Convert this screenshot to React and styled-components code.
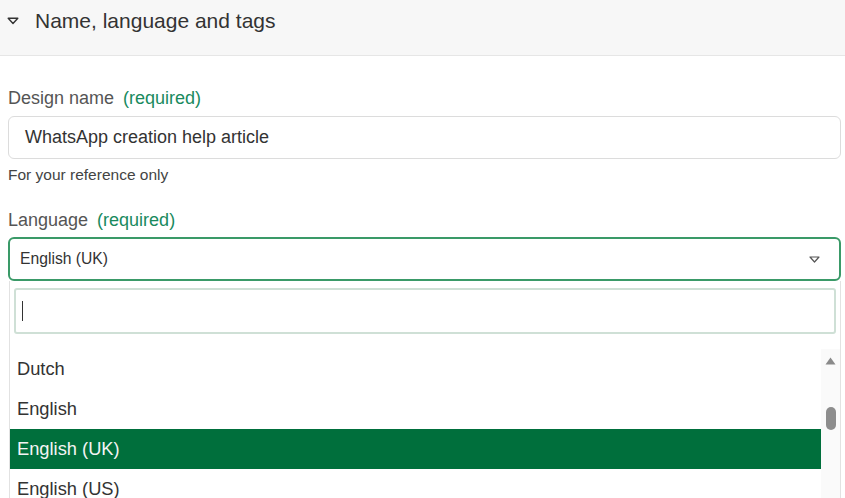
import styled, {createGlobalStyle} from "styled-components";

const GlobalStyle = createGlobalStyle`
  html, body {
    margin: 0;
    padding: 0;
    background: #ffffff;
    font-family: "Liberation Sans", Arial, sans-serif;
  }
`;

const languages = ["Dutch", "English", "English (UK)", "English (US)"];

const App = () => {
    return (
        <Page>
            <GlobalStyle/>
            <Header>
                <svg width="12" height="8" viewBox="0 0 12 8">
                    <path d="M1.2 1.2 L10.8 1.2 L6 6.5 Z" fill="none" stroke="#333" strokeWidth="1.4" strokeLinejoin="round"/>
                </svg>
                <HeaderTitle>Name, language and tags</HeaderTitle>
            </Header>
            <Body>
                <Label>Design name <Required>(required)</Required></Label>
                <TextBox>WhatsApp creation help article</TextBox>
                <Hint>For your reference only</Hint>
                <Label Top="25px">Language <Required>(required)</Required></Label>
                <Select>
                    <span>English (UK)</span>
                    <svg width="11" height="7" viewBox="0 0 11 7">
                        <path d="M1 1 L10 1 L5.5 6 Z" fill="none" stroke="#555" strokeWidth="1.2" strokeLinejoin="round"/>
                    </svg>
                </Select>
                <Dropdown>
                    <SearchWrap>
                        <Search>
                            <Caret/>
                        </Search>
                    </SearchWrap>
                    <ListArea>
                        <List>
                            {languages.map((lang) => (
                                <Option key={lang} Selected={lang === "English (UK)"}>{lang}</Option>
                            ))}
                        </List>
                        <ScrollBar>
                            <svg width="11" height="8" viewBox="0 0 11 8">
                                <path d="M5.5 0.5 L10.5 7.5 L0.5 7.5 Z" fill="#8a8a8a"/>
                            </svg>
                            <Thumb/>
                        </ScrollBar>
                    </ListArea>
                </Dropdown>
            </Body>
        </Page>
    )
}

export default App;

const Page = styled.div`
  width: 845px;
  height: 498px;
  overflow: hidden;
  background: #fff;
`;
const Header = styled.div`
  height: 56px;
  background: #f7f7f7;
  border-bottom: 1px solid #e6e6e6;
  display: flex;
  align-items: center;
  gap: 16px;
  padding: 0 0 0 7px;
  box-sizing: border-box;
  svg {
    margin-top: -14px;
  }
`;
const HeaderTitle = styled.span`
  font-size: 21px;
  color: #333;
  margin-top: -13px;
`;
const Body = styled.div`
  padding: 31px 4px 0 8px;
`;
const Label = styled.div`
  font-size: 18px;
  color: #555;
  margin-top: ${props => props.Top || "0"};
  line-height: 22px;
`;
const Required = styled.span`
  color: #198a5e;
  margin-left: 4px;
`;
const TextBox = styled.div`
  margin-top: 7px;
  height: 43px;
  box-sizing: border-box;
  border: 1px solid #dcdcdc;
  border-radius: 6px;
  display: flex;
  align-items: center;
  padding-left: 16px;
  font-size: 18px;
  color: #333;
`;
const Hint = styled.div`
  font-size: 15.5px;
  color: #444;
  margin-top: 7px;
  line-height: 18px;
`;
const Select = styled.div`
  margin-top: 6px;
  height: 44px;
  box-sizing: border-box;
  border: 2px solid #3a9a68;
  border-radius: 6px;
  display: flex;
  align-items: center;
  justify-content: space-between;
  padding: 0 19px 0 10px;
  font-size: 15.7px;
  color: #333;
`;
const Dropdown = styled.div`
  margin: 0 0 0 1px;
  border-left: 1px solid #e2e2e2;
  border-right: 1px solid #e2e2e2;
  background: #fff;
`;
const SearchWrap = styled.div`
  padding: 7px 4px 0 4px;
`;
const Search = styled.div`
  height: 46px;
  box-sizing: border-box;
  border: 2px solid #cfe0d6;
  border-radius: 3px;
  display: flex;
  align-items: center;
  padding-left: 6px;
`;
const Caret = styled.div`
  width: 1px;
  height: 20px;
  background: #333;
`;
const ListArea = styled.div`
  margin-top: 15px;
  display: flex;
`;
const List = styled.div`
  flex: 1;
  display: flex;
  flex-direction: column;
`;
const Option = styled.div`
  height: 40px;
  display: flex;
  align-items: center;
  padding-left: 7px;
  font-size: 18.3px;
  color: ${props => props.Selected ? "#f4f4f4" : "#333"};
  background: ${props => props.Selected ? "#006f3c" : "transparent"};
`;
const ScrollBar = styled.div`
  width: 19px;
  background: #fafafa;
  display: flex;
  flex-direction: column;
  align-items: center;
  padding-top: 8px;
  gap: 42px;
`;
const Thumb = styled.div`
  width: 10px;
  height: 23px;
  border-radius: 5px;
  background: #8d8d8d;
`;
